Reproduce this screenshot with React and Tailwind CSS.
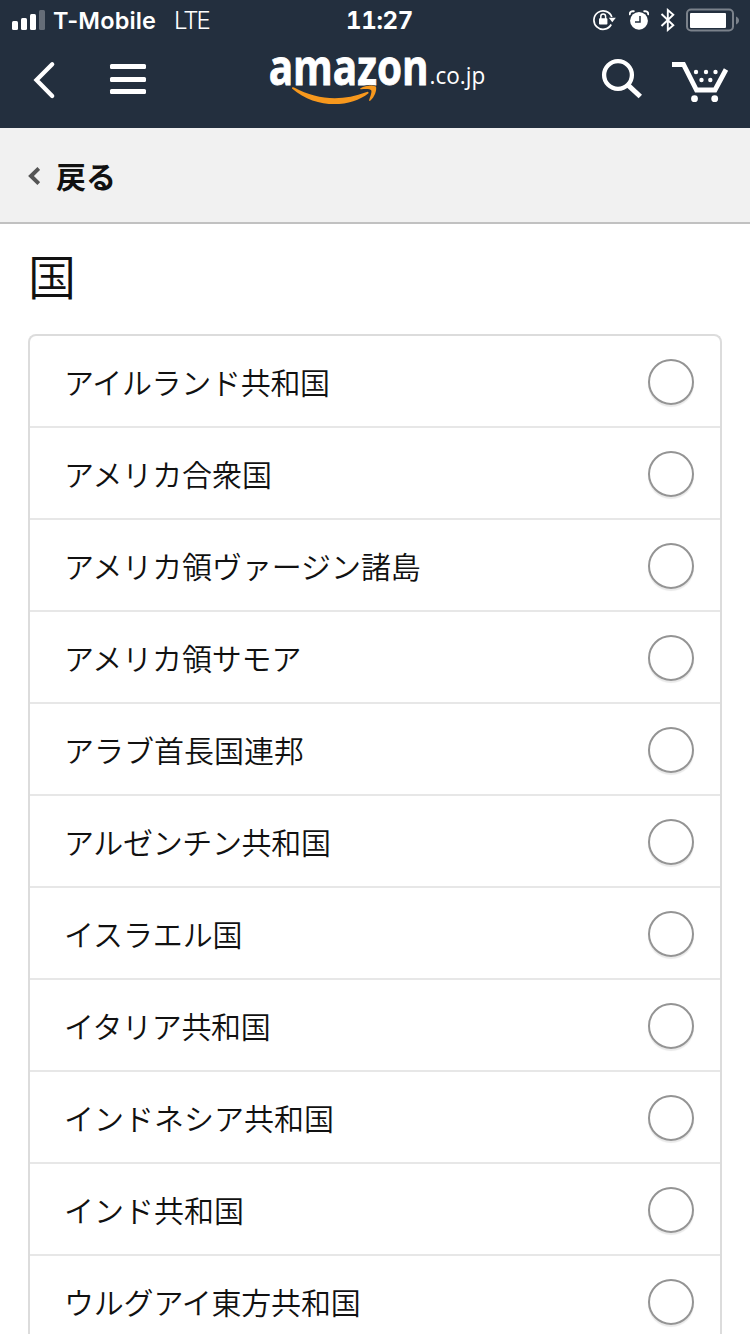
const COUNTRIES = [
  { name: 'アイルランド共和国', tracking: 'tracking-[-0.3px]' },
  { name: 'アメリカ合衆国', tracking: 'tracking-[-0.1px]' },
  { name: 'アメリカ領ヴァージン諸島', tracking: 'tracking-[-0.1px]' },
  { name: 'アメリカ領サモア', tracking: 'tracking-[-0.15px]' },
  { name: 'アラブ首長国連邦', tracking: 'tracking-[0px]' },
  { name: 'アルゼンチン共和国', tracking: 'tracking-[-0.35px]' },
  { name: 'イスラエル国', tracking: 'tracking-[-0.1px]' },
  { name: 'イタリア共和国', tracking: 'tracking-[-0.35px]' },
  { name: 'インドネシア共和国', tracking: 'tracking-[0px]' },
  { name: 'インド共和国', tracking: 'tracking-[0px]' },
  { name: 'ウルグアイ東方共和国', tracking: 'tracking-[-0.2px]' },
]

function StatusBar() {
  return (
    <div className="flex h-10 items-center font-['Inter',sans-serif] leading-10">
      <svg className="ml-3 h-5 w-[33px] shrink-0" viewBox="0 0 33 20" fill="#fff">
        <rect x="0" y="11" width="6" height="9" rx="1.5" />
        <rect x="9" y="8" width="6" height="12" rx="1.5" />
        <rect x="18" y="4" width="6" height="16" rx="1.5" />
        <rect x="27" y="0" width="6" height="20" rx="1.5" opacity=".3" />
      </svg>
      <span className="mt-0.5 ml-2 w-[121px] shrink-0 text-[23.5px] font-semibold tracking-[0.15px] whitespace-nowrap">T-Mobile</span>
      <span className="mt-0.5 w-[172px] shrink-0 text-[24px] font-light tracking-[-2px]">LTE</span>
      <span className="mt-0.5 w-[247px] shrink-0 text-[24px] font-bold tracking-[-0.3px] tabular-nums">11:27</span>

      {/* rotation lock */}
      <svg className="h-[22px] w-[23px] shrink-0" viewBox="0 0 23 22" fill="none" stroke="#fff" strokeWidth="1.7">
        <path d="M18.8 8A9.2 9.2 0 1 0 18.2 15.5" />
        <path d="M15.8 8.8h7l-3.5 4.5z" fill="#fff" stroke="none" />
        <rect x="6" y="9.3" width="8.4" height="6.2" rx=".8" fill="#fff" stroke="none" />
        <path d="M7.8 10V7.5a2.4 2.4 0 0 1 4.800 0V10" strokeWidth="1.5" />
      </svg>
      {/* alarm */}
      <svg className="ml-[13px] h-[22px] w-5 shrink-0" viewBox="0 0 20 22" fill="none" stroke="#fff">
        <circle cx="10" cy="11.8" r="8.9" fill="#fff" stroke="none" />
        <path d="M.7 5.200C.8 3 2.500 1.800 4.700 2.300M19.300 5.200C19.200 3 17.500 1.800 15.300 2.300" strokeWidth="2" strokeLinecap="round" />
        <path d="M11 7v6H6" stroke="#232f3e" strokeWidth="1.5" />
      </svg>
      <svg className="ml-[11px] h-6 w-4 shrink-0" viewBox="0 0 16 24" fill="none" stroke="#fff" strokeWidth="1.9">
        <path d="M1.500 6l11.800 11.300L7.800 22V2l5.500 4.700L1.500 18" />
      </svg>
      <svg className="ml-2.5 h-6 w-[54px] shrink-0" viewBox="0 0 54 24">
        <rect x="1" y="1.5" width="46" height="21" rx="4" fill="none" stroke="#7b828b" strokeWidth="2" />
        <rect x="4" y="5" width="36" height="15" rx="1" fill="#fff" />
        <path d="M50 8.500c4 1.500 4 6.500 0 8z" fill="#7b828b" />
      </svg>
    </div>
  )
}

function Logo() {
  return (
    <svg className="-mt-5 ml-[119px] h-20 w-[224px] shrink-0" viewBox="265 30 224 80" aria-label="amazon.co.jp">
      <text transform="translate(268.7 84.7) scale(.834 1)" fill="#fff" stroke="#fff" strokeWidth=".8" fontFamily="Open Sans, sans-serif" fontWeight="700" fontSize="48.5">amazon</text>
      <text transform="translate(429.500 84) scale(.96 1)" fill="#fff" fontFamily="Open Sans, sans-serif" fontSize="23.5">.co.jp</text>
      <path d="M292 87.500q1-.7 2 0C318 100.500 343 101 366 92.200q3-1 2.500 1C351 107.500 316 109.500 292 88.500z" fill="#f7981d" />
      <path d="M360.500 88.200C366 84.700 373 85 376 86.500c1 4-1.500 10.500-5.500 14-1 .8-1.800.3-1.300-.8 1.500-4 2.800-8 2-9.500-1-1.600-6-1.400-9.700-1-1.200.2-1.800-.5-1-1z" fill="#f7981d" stroke="#232f3e" strokeWidth="1" paintOrder="stroke" />
    </svg>
  )
}

function NavBar() {
  return (
    <div className="flex h-[88px] items-start pt-2.5">
      <svg className="mt-[11px] ml-8 h-10 w-6 shrink-0" viewBox="0 0 24 40" fill="none" stroke="#fff" strokeWidth="4.3">
        <path d="M20.200 3.200L4.500 19l15.700 16" strokeLinecap="round" />
      </svg>
      <div className="mt-3.5 ml-[54px] flex w-9 shrink-0 flex-col gap-[7.5px]">
        <div className="h-[5px] rounded-[1.5px] bg-white" />
        <div className="h-[5px] rounded-[1.5px] bg-white" />
        <div className="h-[5px] rounded-[1.5px] bg-white" />
      </div>
      <Logo />
      <svg className="mt-2 ml-[111px] h-[42px] w-[42px] shrink-0" viewBox="600 58 42 42" fill="none" stroke="#fff">
        <circle cx="618" cy="75" r="13.9" strokeWidth="4.3" />
        <path d="M628.500 85.500l10 9.300" strokeWidth="5" strokeLinecap="square" />
      </svg>
      <svg className="mt-2.5 ml-[29px] h-[44px] w-[58px] shrink-0" viewBox="671 60 58 44" fill="none" stroke="#fff">
        <path d="M672 64.500h11.500L696.500 90h18.500l11-20.500" strokeWidth="4.8" />
        <g fill="#fff" stroke="none">
          <circle cx="696" cy="72" r="2.2" />
          <circle cx="706" cy="72" r="2.2" />
          <circle cx="715.5" cy="72" r="2.2" />
          <circle cx="701.5" cy="80" r="2.2" />
          <circle cx="710.3" cy="80" r="2.2" />
          <circle cx="694.5" cy="98.7" r="3.4" />
          <circle cx="714.7" cy="98.7" r="3.4" />
        </g>
      </svg>
    </div>
  )
}

function CountryRow({ name, tracking }) {
  return (
    <li className="flex h-[92px] items-center justify-between border-b-2 border-[#e7e7e7] pr-[26px] pl-[34px]">
      <span className={`text-[30px] leading-[44px] whitespace-nowrap ${tracking}`}>{name}</span>
      <span className="mt-0.5 h-[46px] w-[46px] shrink-0 rounded-full border-2 border-[#949494] shadow-[0_2px_1px_#e9e9e9]" />
    </li>
  )
}

export default function App() {
  return (
    <div className="h-[1334px] w-[750px] overflow-hidden bg-white font-['Noto_Sans_CJK_JP',sans-serif] text-[#111]">
      <header className="h-32 bg-[#232f3e] text-white">
        <StatusBar />
        <NavBar />
      </header>

      <div className="flex h-24 items-center border-b-2 border-[#c1c1c1] bg-[#f1f1f1] pl-7">
        <svg className="mt-0.5 h-5 w-3" viewBox="0 0 12 20" fill="none" stroke="#555" strokeWidth="4">
          <path d="M10.800 2.500L3 10l7.800 7.500" />
        </svg>
        <span className="ml-4 text-[30px] leading-10 font-bold">戻る</span>
      </div>

      <h1 className="mt-[15px] ml-7 text-[48px] leading-[70px] font-[350]">国</h1>

      <ul className="mx-7 mt-[25px] rounded-t-lg border-2 border-b-0 border-[#dcdcdc] font-[350]">
        {COUNTRIES.map(c => <CountryRow key={c.name} {...c} />)}
      </ul>
    </div>
  )
}
